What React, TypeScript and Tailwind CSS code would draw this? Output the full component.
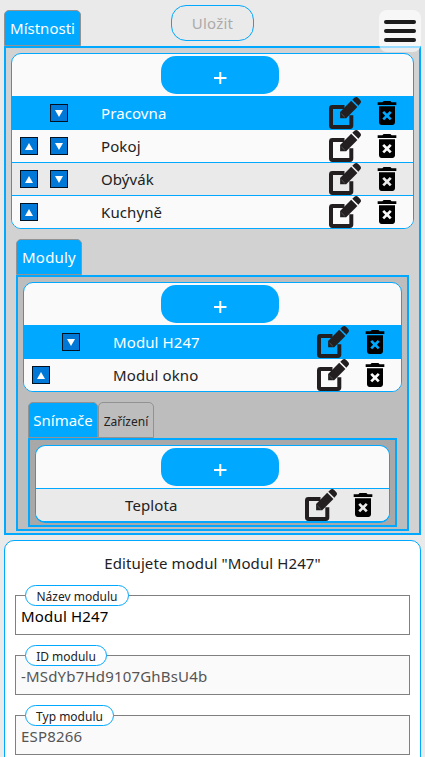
import type { ReactNode } from 'react';
import { MdDeleteForever } from 'react-icons/md';

function EditIcon() {
  return (
    <svg viewBox="0 0 32 32" className="block size-8 shrink-0">
      <path d="M15.5 10H3.4Q2 10 2 11.4V28.6Q2 30 3.4 30H20.9Q22.3 30 22.3 28.6V18.2" fill="none" stroke="#231f20" strokeWidth="4" />
      <path d="M11.1 21.3V14.9L22.2 3.8L28.4 10L17.2 21.3Z" fill="#231f20" />
      <path d="M12.4 16.8L15.8 20.2" stroke="#777" strokeWidth="0.6" />
      <path d="M23.3 2.8L25.4 .8Q27.2-.7 29 .8L31.2 3Q32.8 4.8 31.2 6.6L29.4 8.8Z" fill="#231f20" />
    </svg>
  );
}

function Arrow({ dir }: { dir: 'up' | 'down' }) {
  return (
    <span className="flex size-[18px] shrink-0 items-center justify-center border border-[#001222] bg-[#0078d7]">
      <svg viewBox="0 0 8 7" className={dir === 'up' ? 'h-[7px] w-2' : 'h-[7px] w-2 rotate-180'}>
        <path d="M4 0L8 7H0Z" fill="#fff" />
      </svg>
    </span>
  );
}

type RowProps = { name: string; up?: boolean; down?: boolean; active?: boolean; alt?: boolean };

function Row({ name, up, down, active, alt }: RowProps) {
  const tone = active ? 'bg-[#00a8ff] text-white' : alt ? 'bg-[#eaeaea] text-[#222]' : 'bg-[#fafafa] text-[#222]';
  return (
    <div className={`flex h-[33px] items-center border-t border-[#00a8ff] ${tone}`}>
      <div className="ml-2 flex w-[81px] shrink-0 gap-[11.5px]">
        {up ? <Arrow dir="up" /> : <span className="size-[18px]" />}
        {down && <Arrow dir="down" />}
      </div>
      <span className="grow text-[15px] leading-8 tracking-[0.1px]">{name}</span>
      <EditIcon />
      <MdDeleteForever className="mr-2.5 ml-2.5 size-8 shrink-0 text-black" />
    </div>
  );
}

function List({ children, className = '' }: { children: ReactNode; className?: string }) {
  return (
    <div className={`mx-[5px] overflow-hidden rounded-[10px] border border-[#00a8ff] bg-[#fafafa] ${className}`}>
      <div className="flex h-[42px] items-start justify-center pt-0.5 pl-[15px]">
        <button className="h-[38px] w-[118px] rounded-[15px] bg-[#00a8ff] text-white">
          <svg viewBox="0 0 118 38" className="block h-[38px] w-[118px]">
            <path d="M53 22H65.5M59.3 16V28" stroke="#fff" strokeWidth="2" />
          </svg>
        </button>
      </div>
      {children}
    </div>
  );
}

function Field({ label, value, width, disabled }: { label: string; value: string; width: string; disabled?: boolean }) {
  return (
    <div className={`mb-5 h-10 border border-[#808080] ${disabled ? 'bg-[#fafafa] text-[#555]' : 'bg-white text-black'}`}>
      <div className={`-mt-[11px] ml-[9px] flex h-[21px] items-center justify-center rounded-[11px] border border-[#00a8ff] bg-white pt-0.5 text-[12px] text-[#222] ${width}`}>
        {label}
      </div>
      <div className="ml-[5px] text-[15px] leading-5 tracking-[0.18px]">{value}</div>
    </div>
  );
}

const tab = 'flex h-9 items-center justify-center rounded-t-[5px] border border-[#929292]';

export default function App() {
  return (
    <div className="relative h-[757px] w-[425px] overflow-hidden bg-[#eaeaea] px-1 font-['Noto_Sans',sans-serif]">
      <div className="flex h-[46px] items-start">
        <div className={`${tab} mt-2.5 w-[77px] bg-[#00a8ff] text-[15px] text-white`}>Místnosti</div>
        <button className="mt-[5px] ml-[90px] h-9 w-[83px] rounded-[15px] border border-[#00a8ff] text-[15px] tracking-[0.2px] text-[#aaa]">Uložit</button>
      </div>
      <div className="h-[489px] border-2 border-[#00a8ff] bg-[#d2d2d2] pt-[5px]">
        <List>
          <Row name="Pracovna" down active />
          <Row name="Pokoj" up down />
          <Row name="Obývák" up down alt />
          <Row name="Kuchyně" up />
        </List>
        <div className="mx-2.5 mt-2.5">
          <div className={`${tab} w-[66px] bg-[#00a8ff] text-[15px] tracking-[0.2px] text-white`}>Moduly</div>
          <div className="h-[256px] border-2 border-[#00a8ff] bg-[#bdbdbd] pt-[5px]">
            <List>
              <Row name="Modul H247" down active />
              <Row name="Modul okno" up />
            </List>
            <div className="mx-2.5 mt-2.5">
              <div className="flex">
                <div className={`${tab} w-[70px] bg-[#00a8ff] text-[15px] text-white`}>Snímače</div>
                <div className={`${tab} w-14 pt-[3px] text-[12px] text-[#222]`}>Zařízení</div>
              </div>
              <div className="h-[89px] border-2 border-[#00a8ff] bg-[#a8a8a8] pt-[5px]">
                <List className="border-b-2">
                  <Row name="Teplota" alt />
                </List>
              </div>
            </div>
          </div>
        </div>
      </div>
      <div className="mt-[5px] h-[240px] rounded-t-[10px] border border-[#00a8ff] bg-white px-2.5">
        <div className="h-[54px] pt-[11px] text-center text-[15px] leading-[22px] tracking-[0.1px] text-[#222]">Editujete modul "Modul H247"</div>
        <Field label="Název modulu" value="Modul H247" width="w-[104px]" />
        <Field label="ID modulu" value="-MSdYb7Hd9107GhBsU4b" width="w-[82px]" disabled />
        <Field label="Typ modulu" value="ESP8266" width="w-[89px]" disabled />
      </div>
      <button className="absolute top-2.5 left-[379px] flex size-[42px] flex-col items-center justify-center gap-[5px] rounded-[8px] bg-white/60">
        <span className="h-1 w-8 rounded-full bg-[#1c1c1c]" />
        <span className="h-1 w-8 rounded-full bg-[#1c1c1c]" />
        <span className="h-1 w-8 rounded-full bg-[#1c1c1c]" />
      </button>
    </div>
  );
}
